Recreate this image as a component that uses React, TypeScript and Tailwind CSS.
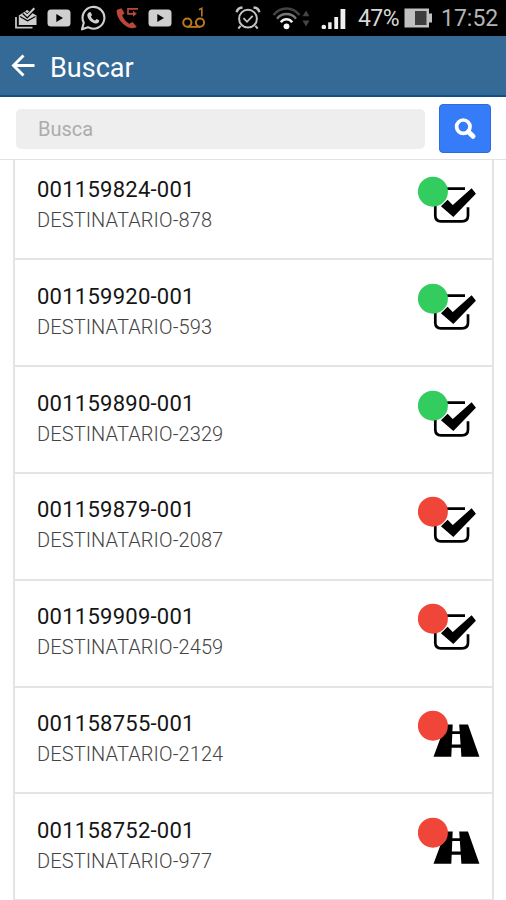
type ItemState = 'delivered' | 'onRoute';

interface Item {
  code: string;
  recipient: string;
  ok: boolean;
  state: ItemState;
}

const items: Item[] = [
  { code: '001159824-001', recipient: 'DESTINATARIO-878', ok: true, state: 'delivered' },
  { code: '001159920-001', recipient: 'DESTINATARIO-593', ok: true, state: 'delivered' },
  { code: '001159890-001', recipient: 'DESTINATARIO-2329', ok: true, state: 'delivered' },
  { code: '001159879-001', recipient: 'DESTINATARIO-2087', ok: false, state: 'delivered' },
  { code: '001159909-001', recipient: 'DESTINATARIO-2459', ok: false, state: 'delivered' },
  { code: '001158755-001', recipient: 'DESTINATARIO-2124', ok: false, state: 'onRoute' },
  { code: '001158752-001', recipient: 'DESTINATARIO-977', ok: false, state: 'onRoute' },
];

const YoutubeIcon = () => (
  <svg width="24" height="18" viewBox="0 0 24 18">
    <rect x="0.5" y="0.5" width="23" height="17" rx="3.5" fill="#cfcfcf" />
    <path d="M9.3 5 L16 9 L9.3 13 Z" fill="#000" />
  </svg>
);

const StatusBar = () => (
  <div className="flex h-9 shrink-0 items-center bg-black">
    {/* Notifications */}
    <svg className="ml-[14px]" width="24" height="24" viewBox="0 0 24 24" fill="none">
      <path d="M2 11 V21.6 H18.5" stroke="#c4c4c4" strokeWidth="1.8" />
      <path d="M4.8 9.5 L13 4 L22.5 9.5 V19 H4.8 Z" fill="#cfcfcf" />
      <path d="M6 10.5 L13.6 14.8 L21.5 10.5" stroke="#000" strokeWidth="1.2" />
      <path d="M9.5 6.5 L13.2 10 L20.5 2.5" stroke="#000" strokeWidth="3.8" />
      <path d="M9.8 6.5 L13.2 9.7 L20.3 2.2" stroke="#cfcfcf" strokeWidth="2" />
    </svg>
    <div className="ml-[9px]">
      <YoutubeIcon />
    </div>
    <svg className="ml-[9px]" width="26" height="26" viewBox="0 0 26 26" fill="none">
      <path
        d="M2 24.3 L3.8 17.8 A10.9 10.9 0 1 1 8 22.2 Z"
        stroke="#cfcfcf"
        strokeWidth="2.1"
        strokeLinejoin="round"
      />
      <path
        d="M9.4 7.2 L10.8 7.3 L12 10.1 L10.9 11.7 C11.8 13.6 13.2 14.7 15.2 15.5 L16.6 14 L19.2 15.3 C19.2 17.6 17.6 18.8 15.7 18.6 C11.5 17.8 8.3 14.8 7.4 11 C7.1 9.2 7.9 7.7 9.4 7.2 Z"
        fill="#cfcfcf"
      />
    </svg>
    <svg className="ml-[9px]" width="25" height="24" viewBox="0 0 25 24" fill="none">
      <path
        d="M2 3.8 C0.6 7 3.5 14.5 9.5 19 C14 22.5 18.5 23.3 21.7 20.8 L17.6 16 L14.2 17.8 C11 16 8 12.3 7.2 9.3 L9.5 7.2 L6.5 2.3 Z"
        fill="#b9483a"
      />
      <path d="M23 2.8 H13 V7.8 H20" stroke="#b9483a" strokeWidth="1.7" />
      <path d="M18 4.8 L21.8 7.8 L18 10.8 Z" fill="#b9483a" />
    </svg>
    <div className="ml-[8px]">
      <YoutubeIcon />
    </div>
    <svg className="ml-[10px]" width="24" height="22" viewBox="0 0 24 22" fill="none" stroke="#b97820">
      <circle cx="5.3" cy="15.6" r="4.1" strokeWidth="2" />
      <circle cx="18" cy="15.6" r="4.1" strokeWidth="2" />
      <path d="M5.3 19.9 H18" strokeWidth="1.8" />
      <path d="M17 2.7 L19.8 1.3 V9.5" strokeWidth="1.6" />
    </svg>

    {/* System status */}
    <svg className="ml-[29px]" width="26" height="26" viewBox="0 0 26 26" fill="none" stroke="#c4c4c4">
      <circle cx="13" cy="13.7" r="8.9" strokeWidth="2" />
      <path d="M8.5 13.2 L12 16.8 L17.7 10.9" strokeWidth="1.8" />
      <path d="M1.6 7.3 C2.3 4.3 4.2 2.6 7.5 2.5 M24.4 7.3 C23.7 4.3 21.8 2.6 18.5 2.5" strokeWidth="2.4" />
      <path d="M5.6 20.8 L3.3 23.7 M20.4 20.8 L22.7 23.7" strokeWidth="2" />
    </svg>
    <svg className="ml-[11px]" width="40" height="24" viewBox="0 0 40 24" fill="none">
      <path d="M1.5 9 C8.5 0.3 20.5 0.3 27.5 9" stroke="#444" strokeWidth="2.4" />
      <path d="M5 12.7 C10 6.5 19 6.5 24 12.7" stroke="#777" strokeWidth="2.4" />
      <path d="M8.8 16.2 C12 12.3 17 12.3 20.2 16.2" stroke="#f2f2f2" strokeWidth="2.5" />
      <circle cx="14.5" cy="20.3" r="2.9" fill="#fff" />
      <path d="M30.5 10.2 L34 4.5 L37.5 10.2 Z M30.5 14.5 L34 20.5 L37.5 14.5 Z" fill="#444" />
    </svg>
    <svg className="ml-[9px]" width="26" height="22" viewBox="0 0 26 22" fill="#f0f0f0">
      <circle cx="2.8" cy="20" r="2.3" />
      <rect x="7.2" y="15.3" width="3.4" height="6.7" />
      <rect x="13.3" y="10" width="3.8" height="12" />
      <rect x="19.5" y="2" width="4.8" height="20" />
    </svg>
    <span className="ml-[11px] w-[42px] whitespace-nowrap text-[23px] leading-none tracking-[-0.6px] text-[#d8d8d8]">
      47%
    </span>
    <svg className="ml-[4px]" width="29" height="20" viewBox="0 0 29 20">
      <rect x="0.5" y="0.5" width="24.5" height="19" fill="#c0c0c0" />
      <rect x="11" y="3" width="11.5" height="14" fill="#3d3d3d" />
      <rect x="25" y="5.5" width="3" height="9" fill="#c0c0c0" />
    </svg>
    <span className="ml-[8px] whitespace-nowrap text-[23px] leading-none text-[#b4b4b4]">17:52</span>
  </div>
);

const AppBar = () => (
  <header className="flex h-[61px] shrink-0 items-center border-b-2 border-[#125187] bg-[#356996] pl-[11px]">
    <svg width="25" height="24" viewBox="0 0 25 24" fill="none" stroke="#fff" strokeWidth="2.9">
      <path d="M2.5 11.5 H23.5 M12.5 1.5 L2.5 11.5 L12.5 21.5" />
    </svg>
    <h1 className="ml-[14px] pt-[5px] text-[27px] leading-none text-white">Buscar</h1>
  </header>
);

const SearchBar = () => (
  <div className="flex h-[63px] shrink-0 items-center justify-between border-b border-[#e2e2e2] bg-white pt-px pr-[15px] pl-4">
    <input
      type="text"
      placeholder="Busca"
      className="h-[40px] w-[409px] rounded-[5px] bg-[#eeeeee] px-[22px] text-[20px] outline-none placeholder:text-[#acacac]"
    />
    <button className="flex h-[49px] w-[52px] items-center justify-center rounded-[4px] border border-[#2b6cdf] bg-[#367bf8]">
      <svg width="24" height="24" viewBox="0 0 24 24" fill="none" stroke="#fff">
        <circle cx="10.3" cy="9.7" r="6.7" strokeWidth="3.7" />
        <path d="M15.3 14.7 L20 19.3" strokeWidth="5" strokeLinecap="round" />
      </svg>
    </button>
  </div>
);

const StateIcon = ({ ok, state }: { ok: boolean; state: ItemState }) => (
  <svg width="62" height="49" viewBox="0 0 62 49">
    {state === 'delivered' ? (
      <>
        <path
          d="M28 12.6 H47 M17.3 28 V39.8 Q17.3 45.3 23 45.3 H44 Q50 45.3 50 39.8 V31.3"
          fill="none"
          stroke="#000"
          strokeWidth="2.7"
        />
        <path d="M53.5 13.2 L57 17.6 L35.3 40 L24 30.2 L29.6 24.8 L34.7 29.9 Z" fill="#000" stroke="#000" strokeWidth="1.4" />
      </>
    ) : (
      <>
        <path d="M27.5 14.5 H34.7 L33.3 46.8 H15.5 Z M41.2 14.5 H50 L61.4 46.8 H43.4 Z" fill="#000" />
        <path d="M34 21.2 H42 V24 H34 Z M33 34.4 H43 V37.7 H33 Z" fill="#000" />
      </>
    )}
    <circle cx="14.9" cy="15.7" r="15" fill={ok ? '#33cd5f' : '#f04639'} />
  </svg>
);

const ListItem = ({ item }: { item: Item }) => (
  <li className="flex h-[106.83px] items-start justify-between border-b-2 border-[#e4e4e4] pr-[12px] pl-[22px]">
    <div className="pt-[22.5px]">
      <p className="text-[22px] leading-[28px] tracking-[0.25px] text-[#151515]">{item.code}</p>
      <p className="mt-[2px] text-[20px] leading-[28px] font-light tracking-[0.1px] text-[#444]">{item.recipient}</p>
    </div>
    <div className="pt-[22.5px]">
      <StateIcon ok={item.ok} state={item.state} />
    </div>
  </li>
);

export default function App() {
  return (
    <div className="flex h-[900px] w-[506px] flex-col overflow-hidden bg-white font-['Roboto',sans-serif]">
      <StatusBar />
      <AppBar />
      <SearchBar />
      <main className="flex-1 overflow-hidden px-[13px]">
        {/* List is scrolled slightly under the search bar */}
        <ul className="-mt-[6.6px] w-[481px] border-x-2 border-[#e4e4e4]">
          {items.map((item) => (
            <ListItem key={item.code} item={item} />
          ))}
        </ul>
      </main>
    </div>
  );
}
